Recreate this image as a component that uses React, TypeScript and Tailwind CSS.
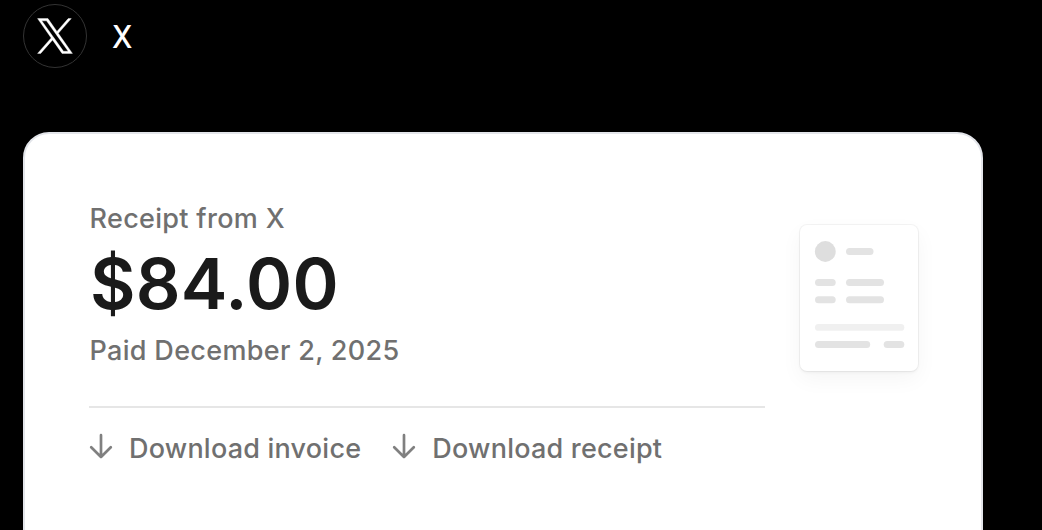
function DownArrow() {
  return (
    <svg viewBox="0 0 24 26" fill="none" stroke="currentColor" strokeWidth="2.7" strokeLinecap="round" strokeLinejoin="round" className="h-[26px] w-6 text-[#808080]">
      <path d="M12 2.2V24M2.2 14.2 12 24l9.8-9.8" />
    </svg>
  );
}

function DownloadButton({ label }: { label: string }) {
  return (
    <button className="flex h-9 items-center whitespace-nowrap">
      <span className="-mt-1.5">
        <DownArrow />
      </span>
      <span className="ml-4 text-[27px] font-medium leading-9 tracking-[0.22px]">{label}</span>
    </button>
  );
}

function ReceiptIllustration() {
  return (
    <div className="mr-px mt-[27px] h-[146px] w-[118px] rounded-[7px] bg-white shadow-[0_0_0_1px_rgba(0,0,0,0.045),0_2px_3px_rgba(0,0,0,0.04),0_8px_22px_rgba(0,0,0,0.045)]">
      <svg viewBox="0 0 118 146" className="h-[146px] w-[118px] fill-[#e3e3e3]">
        <circle cx="25.3" cy="26.5" r="10.4" fill="#dedede" />
        <rect x="46" y="23" width="27.5" height="7" rx="3.5" />
        <rect x="15" y="54" width="20.7" height="7" rx="3.5" />
        <rect x="46" y="54" width="38" height="7" rx="3.5" />
        <rect x="15" y="71.2" width="20.7" height="7" rx="3.5" />
        <rect x="46" y="71.2" width="38" height="7" rx="3.5" />
        <rect x="15" y="99" width="89.3" height="6.8" rx="3.4" fill="#f0f0f0" />
        <rect x="15" y="116" width="55.2" height="7" rx="3.5" />
        <rect x="83.7" y="116" width="20.6" height="7" rx="3.5" />
      </svg>
    </div>
  );
}

export default function App() {
  return (
    <div className="h-[530px] w-[1042px] overflow-hidden bg-black pl-[23px] pt-1 font-['Inter',sans-serif]">
      <header className="flex h-16 items-center">
        <div className="flex size-16 items-center justify-center rounded-full border border-[#333333]">
          <svg viewBox="0 0 24 24" className="size-[38px] fill-white stroke-white stroke-[0.25]">
            <path d="M14.095 10.317 22.286 1h-1.94l-7.115 8.088L7.551 1H1l8.59 12.231L1 23h1.94l7.509-8.543L16.449 23H23l-8.905-12.683Zm-2.658 3.022-.87-1.218L3.64 2.432h2.982l5.59 7.821.867 1.218 7.265 10.166h-2.982l-5.925-8.298Z" />
          </svg>
        </div>
        <h1 className="ml-[25px] origin-left scale-x-[0.94] text-[31px] font-medium leading-none text-white">X</h1>
      </header>
      <main className="mt-16 h-[480px] w-[960px] rounded-[26px] border-2 border-[#e3e5ea] bg-white pl-16 pr-[62px] pt-[64px]">
        <div className="flex justify-between">
          <section className="w-[676px] text-[#707070]">
            <p className="mt-[3px] h-9 pl-[0.5px] text-[27px] font-medium leading-9 tracking-[0.32px]">Receipt from X</p>
            <p className="ml-px mt-[15px] h-16 text-[70px] font-semibold leading-[64px] tracking-[0.25px] text-[#1a1a1a]">$84.00</p>
            <p className="mt-[17px] h-9 pl-[0.5px] text-[27px] font-medium leading-9 tracking-[0.32px]">Paid December 2, 2025</p>
            <hr className="mt-[37px] border-t-2 border-[#e6e6e6]" />
            <div className="mt-[23px] flex gap-[31px]">
              <DownloadButton label="Download invoice" />
              <DownloadButton label="Download receipt" />
            </div>
          </section>
          <ReceiptIllustration />
        </div>
      </main>
    </div>
  );
}
